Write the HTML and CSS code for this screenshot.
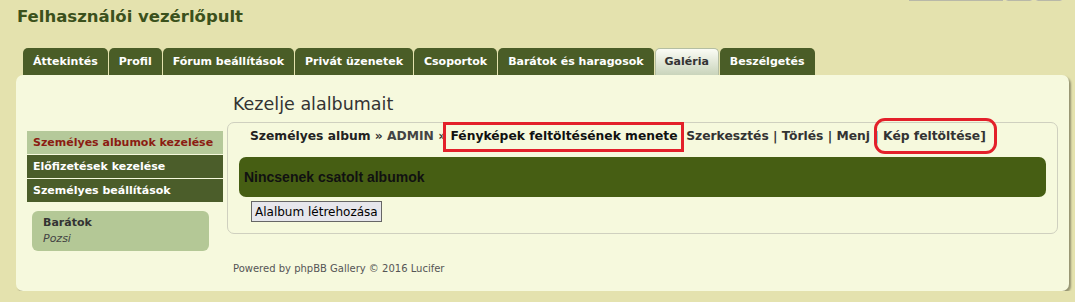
FILE: index.html
```html
<!DOCTYPE html>
<html lang="hu">
<head>
    <meta charset="UTF-8">
    <meta name="viewport" content="width=device-width, initial-scale=1.0">
    <title>Felhasználói vezérlőpult</title>
    <link rel="stylesheet" href="styles.css">
</head>
<body>
    <div class="page">
        <div class="header">
            <h1>Felhasználói vezérlőpult</h1>
            <form class="search">
                <input type="text" class="search-text">
                <button type="button" class="search-btn"></button>
                <button type="button" class="search-btn"></button>
            </form>
        </div>

        <ul class="tabs">
            <li class="tab">Áttekintés</li>
            <li class="tab">Profil</li>
            <li class="tab">Fórum beállítások</li>
            <li class="tab">Privát üzenetek</li>
            <li class="tab">Csoportok</li>
            <li class="tab">Barátok és haragosok</li>
            <li class="tab active">Galéria</li>
            <li class="tab">Beszélgetés</li>
        </ul>

        <div class="panel">
            <div class="sidebar">
                <ul class="menu">
                    <li class="menu-item current">Személyes albumok kezelése</li>
                    <li class="menu-item">Előfizetések kezelése</li>
                    <li class="menu-item">Személyes beállítások</li>
                </ul>
                <div class="friends">
                    <strong>Barátok</strong>
                    <em>Pozsi</em>
                </div>
            </div>

            <div class="main">
                <h2>Kezelje alalbumait</h2>
                <div class="box">
                    <div class="crumbs">
                        <span class="crumb">Személyes album</span> » <span class="crumb admin">ADMIN</span> » <span class="crumb marked">Fényképek feltöltésének menete</span>&nbsp; Szerkesztés | Törlés | Menj | <span class="marked round">Kép feltöltése]</span>
                    </div>
                    <div class="notice">Nincsenek csatolt albumok</div>
                    <button type="button" class="create">Alalbum létrehozása</button>
                </div>
                <p class="footer">Powered by phpBB Gallery © 2016 Lucifer</p>
            </div>
        </div>
    </div>
</body>
</html>
```

FILE: styles.css
```css
body {
    margin: 0;
    background-color: #e4e2ae;
    font-family: "DejaVu Sans", Verdana, sans-serif;
    color: #333;
}
.page {
    padding: 0 6px 0 16px;
}
.header {
    display: flex;
    justify-content: space-between;
    align-items: flex-start;
    height: 48px;
}
h1 {
    margin: 7px 0 0 1px;
    font-size: 16.5px;
    line-height: 20px;
    color: #3b511c;
}
.search {
    display: flex;
    gap: 2px;
    margin: -23px 6px 0 0;
}
.search-text {
    width: 94px;
    height: 24px;
    padding: 0;
    border: 1px solid #b8b8a8;
    background: #fff;
    box-sizing: border-box;
}
.search-btn {
    width: 28px;
    height: 24px;
    border: 1px solid #b8b8a8;
    border-radius: 0 0 3px 3px;
    background: #fff;
}
.tabs {
    display: flex;
    gap: 1px;
    list-style: none;
    margin: 0 0 0 7px;
    padding: 0;
}
.tab {
    height: 27px;
    line-height: 27px;
    padding: 0 10px;
    background-color: #4a5d27;
    color: #fff;
    font-size: 11px;
    font-weight: bold;
    border-radius: 5px 5px 0 0;
}
.tab.active {
    height: 26px;
    line-height: 26px;
    padding: 0 9px;
    background: linear-gradient(#fbfcf5, #c9d4bb);
    border: 1px solid #b4bea3;
    border-bottom: none;
    color: #333;
}
.panel {
    display: grid;
    grid-template-columns: 196px 1fr;
    column-gap: 4px;
    padding: 10px 11px 0 11px;
    height: 206px;
    background-color: #f6f9dd;
    border-radius: 7px;
    box-shadow: 2px 2px 2px rgba(0, 0, 0, 0.35);
}
.sidebar {
    margin-top: 46px;
}
.menu {
    list-style: none;
    margin: 0;
    padding: 0;
}
.menu-item {
    height: 23px;
    line-height: 23px;
    margin-bottom: 1px;
    padding-left: 6px;
    background-color: #4b5d2a;
    color: #fff;
    font-size: 11px;
    font-weight: bold;
}
.menu-item.current {
    background-color: #b5c99a;
    color: #8b1c12;
}
.friends {
    display: flex;
    flex-direction: column;
    margin: 9px 14px 0 5px;
    padding: 4px 11px 5px;
    height: 31px;
    background-color: #b4c896;
    border-radius: 6px;
    font-size: 11px;
    line-height: 16px;
}
.friends em {
    color: #444;
}
h2 {
    margin: 8px 0 7px 6px;
    font-size: 17.5px;
    line-height: 22px;
    font-weight: normal;
    color: #333;
}
.box {
    padding: 5px 11px 11px;
    border: 1px solid #cfd0bf;
    border-radius: 7px;
}
.crumbs {
    padding-left: 11px;
    font-size: 12.3px;
    line-height: 16px;
    font-weight: bold;
    color: #333;
}
.crumb {
    color: #222;
}
.crumb.admin {
    color: #444;
}
.marked {
    position: relative;
    color: #111;
}
.marked::after {
    content: "";
    position: absolute;
    left: -7px;
    right: -6px;
    top: -7px;
    bottom: -9px;
    border: 3px solid #e3202a;
}
.marked.round {
    color: #333;
}
.marked.round::after {
    left: -9px;
    right: -11px;
    top: -11px;
    bottom: -11px;
    border-radius: 11px;
}
.notice {
    margin-top: 13px;
    height: 40px;
    line-height: 40px;
    padding-left: 5px;
    background-color: #465e13;
    border-radius: 7px;
    font-family: "Liberation Sans", Arial, sans-serif;
    font-size: 14px;
    font-weight: bold;
    color: #111;
}
.create {
    margin: 4px 0 0 12px;
    height: 21px;
    padding: 0 3px;
    font-family: "DejaVu Sans", Verdana, sans-serif;
    font-size: 12px;
    color: #000;
    background-color: #e6e6ec;
    border: 1px solid #666;
    border-radius: 0;
}
.footer {
    margin: 29px 0 0 6px;
    font-size: 10px;
    color: #555;
}
```
